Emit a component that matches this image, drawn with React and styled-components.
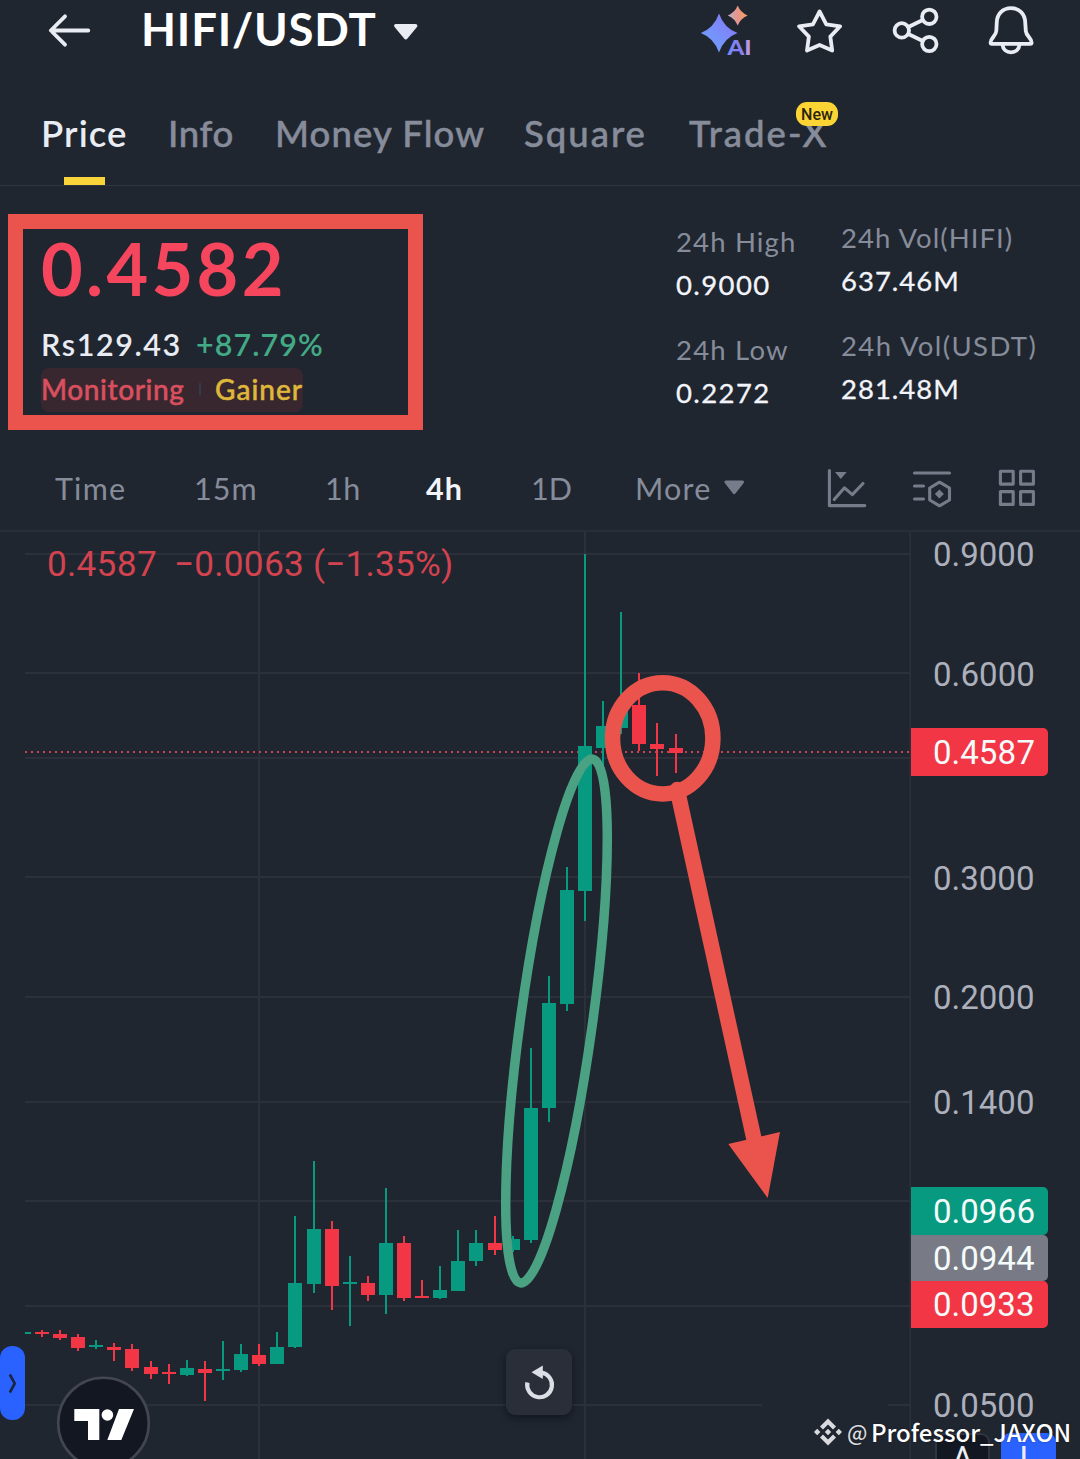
import React from "react";
import styled, { createGlobalStyle } from "styled-components";

const C = {
  bg: "#1f2630",
  line: "#2b303b",
  text: "#eaecf3",
  muted: "#878c9a",
  up: "#089981",
  down: "#f23645",
  mark: "#eb544c",
  yellow: "#fcd535",
};

const Global = createGlobalStyle`
  html, body { margin: 0; padding: 0; background: ${C.bg}; }
  body { overflow: hidden; }
`;

const Screen = styled.main`
  width: 1080px;
  height: 1459px;
  overflow: hidden;
  display: flex;
  flex-direction: column;
  background: ${C.bg};
  color: ${C.text};
  font-family: Lato, "Open Sans", sans-serif;
  font-variant-numeric: lining-nums;
`;

/* ---------- header ---------- */
const Header = styled.header`
  display: flex;
  height: 60px;
  flex: none;
`;
const HeaderIcon = styled.svg`
  display: block;
  flex: none;
  width: ${(p) => p.$w}px;
  height: 60px;
  margin-left: ${(p) => p.$gap || 0}px;
  fill: none;
  stroke: ${C.text};
  stroke-width: 3.8;
  stroke-linecap: round;
  stroke-linejoin: round;
`;
const Title = styled.h1`
  margin: 0 0 0 41px;
  width: 249px;
  font-size: 45.5px;
  font-weight: 700;
  line-height: 58px;
  letter-spacing: 0.8px;
  white-space: nowrap;
  color: #fff;
`;
const AiText = styled.text`
  font: 900 20px Lato, sans-serif;
  stroke: none;
`;

/* ---------- tabs ---------- */
const Tabs = styled.nav`
  display: grid;
  grid-template-columns: 127px 107px 249px 165px 160px;
  box-sizing: border-box;
  flex: none;
  height: 126px;
  padding: 51px 0 0 41px;
  border-bottom: 1px solid #303640;
`;
const Tab = styled.div`
  justify-self: start;
  display: flex;
  flex-direction: column;
  align-items: center;
  position: relative;
  font-size: 36.5px;
  line-height: 44px;
  white-space: nowrap;
  font-weight: ${(p) => (p.$active ? 600 : 500)};
  -webkit-text-stroke: ${(p) => (p.$active ? 0 : 0.5)}px ${C.muted};
  color: ${(p) => (p.$active ? C.text : C.muted)};
  letter-spacing: ${(p) => p.$ls || 0}px;
`;
const Indicator = styled.span`
  width: 41px;
  height: 8px;
  margin-top: 22px;
  background: #f8d33a;
`;
const NewBadge = styled.span`
  position: absolute;
  top: -9px;
  left: 107px;
  width: 42px;
  height: 24px;
  border-radius: 11px;
  background: ${C.yellow};
  color: #2a2410;
  font: 500 16px/25px Roboto, sans-serif;
  letter-spacing: 0;
  text-align: center;
  -webkit-text-stroke: 0;
`;

/* ---------- summary ---------- */
const Summary = styled.section`
  display: flex;
  position: relative;
  flex: none;
  box-sizing: border-box;
  height: 264px;
  padding-left: 41px;
`;
const PriceBlock = styled.div`
  width: 635px;
  padding-top: 46px;
`;
const LastPrice = styled.div`
  font-size: 72px;
  line-height: 72px;
  font-weight: 700;
  letter-spacing: 3.3px;
  color: #f6465d;
`;
const FiatRow = styled.div`
  display: flex;
  margin-top: 20px;
  font-size: 30.5px;
  line-height: 41px;
  font-weight: 600;
`;
const Fiat = styled.span`
  width: 155px;
  letter-spacing: 1.6px;
`;
const Change = styled.span`
  color: #42ab86;
  letter-spacing: 1.05px;
`;
const TagRow = styled.div`
  display: flex;
  align-items: center;
  box-sizing: border-box;
  width: 262px;
  height: 44px;
  margin-top: 3px;
  padding-bottom: 3px;
  border-radius: 8px;
  background: #38272f;
  font-size: 28px;
  font-weight: 500;
  white-space: nowrap;
`;
const TagName = styled.span`
  color: ${(p) => p.$color};
  -webkit-text-stroke: 0.5px ${(p) => p.$color};
  letter-spacing: ${(p) => p.$ls}px;
`;
const TagDivider = styled.i`
  width: 2px;
  height: 12px;
  margin: 0 auto;
  background: #303c48;
`;
const HighlightBox = styled.div`
  position: absolute;
  left: 8px;
  top: 28px;
  box-sizing: border-box;
  width: 415px;
  height: 216px;
  border: 15px solid ${C.mark};
`;
const StatColumn = styled.div`
  display: flex;
  flex-direction: column;
  gap: 29px;
  width: 165px;
  padding-top: ${(p) => p.$top}px;
`;
const Stat = styled.div`
  display: flex;
  flex-direction: column;
  gap: 7px;
  font-size: 27.5px;
  line-height: 36px;
  white-space: nowrap;
`;
const StatLabel = styled.span`
  color: ${C.muted};
  letter-spacing: ${(p) => p.$ls}px;
`;
const StatValue = styled.span`
  color: #f3f4fa;
  -webkit-text-stroke: 0.3px #f3f4fa;
  letter-spacing: ${(p) => p.$ls}px;
`;

/* ---------- interval bar ---------- */
const IntervalBar = styled.div`
  display: flex;
  flex: none;
  height: 80px;
  border-bottom: 2px solid #292e38;
  padding-left: 55px;
`;
const Interval = styled.span`
  width: ${(p) => p.$w}px;
  font-size: 30.5px;
  line-height: 77px;
  white-space: nowrap;
  font-weight: ${(p) => (p.$active ? 700 : 400)};
  color: ${(p) => (p.$active ? "#f3f4fa" : C.muted)};
  letter-spacing: ${(p) => p.$ls || 0}px;
`;
const ToolIcon = styled.svg`
  display: block;
  flex: none;
  width: ${(p) => p.$w}px;
  height: 80px;
  margin-right: ${(p) => p.$gap || 0}px;
  fill: none;
  stroke: #787c8a;
  stroke-width: 3.1;
  stroke-linecap: round;
  stroke-linejoin: round;
`;

/* ---------- chart ---------- */
const ChartArea = styled.section`
  display: flex;
  position: relative;
  flex: 1;
  font-family: Roboto, sans-serif;
`;
const Plot = styled.svg`
  display: block;
  flex: none;
  width: 911px;
  height: 927px;
`;
const Legend = styled.div`
  position: absolute;
  left: 47px;
  top: 11px;
  display: flex;
  font-size: 35.2px;
  line-height: 42px;
  letter-spacing: 0.2px;
  color: #d3434f;
  white-space: pre;
`;
const LegendPrice = styled.span`
  width: 127px;
`;
const Axis = styled.div`
  position: relative;
  width: 169px;
  font-size: 33px;
`;
const AxisLabel = styled.span`
  position: absolute;
  left: 22px;
  top: ${(p) => p.$y - 532 - 20}px;
  line-height: 41px;
  color: #adb0bb;
`;
const PriceTags = styled.div`
  position: absolute;
  left: 0;
  top: ${(p) => p.$y - 532}px;
  display: flex;
  flex-direction: column;
`;
const PriceTag = styled.span`
  box-sizing: border-box;
  width: 137px;
  height: ${(p) => p.$h}px;
  padding-left: 22px;
  line-height: ${(p) => p.$h + 1}px;
  border-radius: 0 5px 5px 0;
  background: ${(p) => p.$bg};
  color: #f4fbfa;
`;
const ScaleButton = styled.span`
  position: absolute;
  left: ${(p) => p.$x}px;
  top: 901px;
  box-sizing: border-box;
  width: 55px;
  height: 55px;
  border: 2px solid ${(p) => p.$border};
  border-radius: 9px;
  background: ${(p) => p.$bg};
  color: #eceef4;
  font-size: 33px;
  line-height: 48px;
  text-align: center;
`;
const ResetButton = styled.div`
  position: absolute;
  left: 506px;
  top: 817px;
  width: 66px;
  height: 66px;
  border-radius: 9px;
  background: #2a2e39;
  box-shadow: 0 3px 7px rgba(5, 8, 14, 0.5);
`;
const Handle = styled.div`
  position: absolute;
  left: 0;
  top: 814px;
  width: 25px;
  height: 74px;
  border-radius: 12px;
  background: #2962ff;
`;
const Overlay = styled.svg`
  position: absolute;
  left: 0;
  top: 0;
  width: 1080px;
  height: 927px;
`;
const Watermark = styled.div`
  position: absolute;
  left: 814px;
  top: 882px;
  display: flex;
  align-items: center;
  height: 36px;
  font: 500 24px/36px "Noto Sans CJK SC", "Noto Sans", sans-serif;
  color: #fff;
  white-space: nowrap;
  text-shadow: 0 0 2px rgba(0, 0, 0, 0.4);
`;
const WatermarkAt = styled.span`
  width: 24px;
  margin-left: 5px;
  font-size: 21px;
  color: #d9dadd;
`;
const WatermarkName = styled.span`
  letter-spacing: 0;
`;

// [centre x, high, low, body top, body bottom, rising]
const candles = [
  [42, 1330, 1337, 1332, 1334, 0],
  [60, 1330, 1340, 1334, 1338, 0],
  [78, 1334, 1351, 1337, 1348, 0],
  [96, 1340, 1349, 1345, 1347, 1],
  [114, 1343, 1361, 1347, 1350, 0],
  [132, 1344, 1371, 1349, 1368, 0],
  [151, 1361, 1379, 1367, 1374, 0],
  [169, 1364, 1384, 1372, 1374, 0],
  [187, 1360, 1376, 1368, 1375, 1],
  [205, 1361, 1401, 1369, 1373, 0],
  [223, 1341, 1380, 1369, 1371, 1],
  [241, 1344, 1372, 1354, 1370, 1],
  [259, 1344, 1366, 1355, 1364, 0],
  [277, 1332, 1364, 1347, 1364, 1],
  [295, 1216, 1348, 1283, 1347, 1],
  [314, 1161, 1293, 1229, 1284, 1],
  [332, 1221, 1310, 1229, 1286, 0],
  [350, 1256, 1326, 1282, 1284, 1],
  [368, 1276, 1301, 1283, 1295, 0],
  [386, 1188, 1314, 1243, 1295, 1],
  [404, 1236, 1301, 1243, 1298, 0],
  [422, 1280, 1298, 1296, 1298, 0],
  [440, 1266, 1299, 1290, 1298, 1],
  [458, 1230, 1291, 1261, 1291, 1],
  [476, 1230, 1266, 1243, 1261, 1],
  [495, 1216, 1255, 1243, 1250, 0],
  [513, 1236, 1252, 1239, 1250, 1],
  [531, 1048, 1243, 1108, 1240, 1],
  [549, 976, 1122, 1003, 1108, 1],
  [567, 867, 1011, 890, 1004, 1],
  [585, 554, 921, 746, 891, 1],
  [603, 701, 766, 726, 748, 1],
  [621, 612, 734, 708, 728, 1],
  [639, 673, 751, 705, 744, 0],
  [657, 723, 776, 744, 749, 0],
  [676, 734, 773, 748, 753, 0],
];

const gridRows = [554, 673, 758, 877, 997, 1102, 1201, 1306];
const axisLabels = [
  ["0.9000", 554],
  ["0.6000", 674],
  ["0.3000", 878],
  ["0.2000", 997],
  ["0.1400", 1102],
  ["0.0500", 1405],
];

function PriceChart() {
  return (
    <ChartArea>
      <Plot viewBox="0 532 911 927">
        <g stroke={C.line} strokeWidth="2">
          {gridRows.map((y) => (
            <line key={y} x1="25" x2="910" y1={y} y2={y} />
          ))}
          <path d="M25 1405H762M888 1405H910" />
          <path d="M259 532V1459M585 532V1459M910.5 532V1459" />
        </g>
        <line x1="25" x2="911" y1="752" y2="752" stroke="#c94350" strokeWidth="2" strokeDasharray="2 4" />
        <rect x="25" y="1332" width="6" height="2" fill={C.up} />
        {candles.map(([x, hi, lo, top, bottom, up]) => (
          <g key={x} fill={up ? C.up : C.down}>
            <rect x={x - 1} y={hi} width="2" height={lo - hi} />
            <rect x={x - 7} y={top} width="14" height={bottom - top} />
          </g>
        ))}
      </Plot>
      <Legend>
        <LegendPrice>0.4587</LegendPrice>
        <span>−0.0063 (−1.35%)</span>
      </Legend>
      <Axis>
        {axisLabels.map(([t, y]) => (
          <AxisLabel key={t} $y={y}>{t}</AxisLabel>
        ))}
        <PriceTags $y={728}>
          <PriceTag $h={48} $bg={C.down}>0.4587</PriceTag>
        </PriceTags>
        <PriceTags $y={1187}>
          <PriceTag $h={48} $bg={C.up}>0.0966</PriceTag>
          <PriceTag $h={46} $bg="#787b86">0.0944</PriceTag>
          <PriceTag $h={47} $bg={C.down}>0.0933</PriceTag>
        </PriceTags>
        <ScaleButton $x={24} $bg="#131722" $border="#2f3440">A</ScaleButton>
        <ScaleButton $x={90} $bg="#2962ff" $border="#2962ff">L</ScaleButton>
      </Axis>
      <ResetButton />
      <Handle />
      <Overlay viewBox="0 532 1080 927" fill="none">
        <path d="M9.8 1374.5L14.8 1383.5L9.8 1392.5" stroke="#1b2440" strokeWidth="2.6" />
        <path d="M527.4 1382.5A12.4 12.4 0 1 0 541.5 1372.6" stroke="#dcdee6" strokeWidth="4.2" />
        <path d="M531.5 1372.3L542.8 1365.6V1379Z" fill="#dcdee6" />
        <circle cx="103.5" cy="1423" r="45.3" fill="#131722" stroke="#434651" strokeWidth="2.6" />
        <path d="M74.3 1409H99.3V1440H88V1421H74.3ZM119 1409H134L121.3 1440H107.3Z" fill="#fff" />
        <circle cx="107.4" cy="1415" r="5.8" fill="#fff" />
        <ellipse cx="556.5" cy="1021" rx="36" ry="264.4" transform="rotate(7.86 556.5 1021)" stroke="#4aa283" strokeWidth="9.5" />
        <ellipse cx="662.7" cy="738.3" rx="50.2" ry="55.6" stroke={C.mark} strokeWidth="15.5" />
        <path d="M677.2 789.5L754 1139" stroke={C.mark} strokeWidth="15.4" />
        <circle cx="677.3" cy="789.5" r="7.7" fill={C.mark} />
        <path d="M728.3 1144L780 1132L767.7 1198Z" fill={C.mark} />
      </Overlay>
      <Watermark>
        <svg width="28" height="28" viewBox="0 0 28 28" fill="#d9dadd">
          <path d="M14 0.5L22 8.5L19 11.5L14 6.5L9 11.5L6 8.5Z" />
          <path d="M14 27.5L22 19.5L19 16.5L14 21.5L9 16.5L6 19.5Z" />
          <path d="M3.2 10.8L6.4 14L3.2 17.2L0 14ZM24.8 10.8L28 14L24.8 17.2L21.6 14ZM14 10.8L17.2 14L14 17.2L10.8 14Z" />
        </svg>
        <WatermarkAt>@</WatermarkAt>
        <WatermarkName>Professor_JAXON</WatermarkName>
      </Watermark>
    </ChartArea>
  );
}

export default function App() {
  return (
    <Screen>
      <Global />
      <Header>
        <HeaderIcon $w={60} $gap={40} viewBox="40 0 60 60">
          <path d="M88.3 30.5H51M65 16.3L50.8 30.5L65 44.7" />
        </HeaderIcon>
        <Title>HIFI/USDT</Title>
        <HeaderIcon $w={40} viewBox="390 0 40 60">
          <path d="M396 25.8H415.5L405.8 37.5Z" fill={C.text} />
        </HeaderIcon>
        <HeaderIcon $w={60} $gap={265} viewBox="695 0 60 60">
          <defs>
            <linearGradient id="aiBlue" x1="0" y1="1" x2="1" y2="0">
              <stop offset="0" stopColor="#6aa6ff" />
              <stop offset="1" stopColor="#8875f5" />
            </linearGradient>
            <linearGradient id="aiWarm" x1="0" y1="0.5" x2="1" y2="0.4">
              <stop offset="0" stopColor="#b9b3bd" />
              <stop offset="0.5" stopColor="#e9938b" />
              <stop offset="1" stopColor="#f3a05a" />
            </linearGradient>
            <linearGradient id="aiWord" x1="0" y1="0" x2="1" y2="0">
              <stop offset="0" stopColor="#6f8dfa" />
              <stop offset="0.6" stopColor="#8b7cf2" />
              <stop offset="1" stopColor="#cfa6d8" />
            </linearGradient>
          </defs>
          <path stroke="none" fill="url(#aiBlue)" d="M719 13.5Q724 28 737.5 33Q724 38 719 52.5Q714 38 700.8 33Q714 28 719 13.5Z" />
          <path stroke="none" fill="url(#aiWarm)" d="M737.7 5.5Q740.5 12.5 747.6 15.4Q740.5 18.5 737.7 25.5Q734.9 18.5 727.8 15.4Q734.9 12.5 737.7 5.5Z" />
          <AiText x="727.5" y="54.5" fill="url(#aiWord)" textLength="24" lengthAdjust="spacingAndGlyphs">AI</AiText>
        </HeaderIcon>
        <HeaderIcon $w={50} $gap={40} viewBox="795 0 50 60">
          <path d="M819.6 11.5L826.3 24.3L840.2 26.3L830.3 36.6L832.2 50.6L819.6 45L807 50.6L808.9 36.6L799 26.3L812.9 24.3Z" />
        </HeaderIcon>
        <HeaderIcon $w={50} $gap={45} viewBox="890 0 50 60">
          <circle cx="901.8" cy="30.4" r="7.2" />
          <circle cx="929.3" cy="16.8" r="7.2" />
          <circle cx="929.3" cy="44" r="7.2" />
          <path d="M908.3 27L922.8 20M908.3 34L922.8 41" />
        </HeaderIcon>
        <HeaderIcon $w={50} $gap={46} viewBox="986 0 50 60">
          <path d="M1011 8.2C1002.5 8.2 997.2 14.2 996.8 22L996.3 31C996 36 990.6 38 990.6 42.4Q990.6 43.8 992 43.8H1030.2Q1031.6 43.8 1031.6 42.4C1031.6 38 1026.2 36 1025.8 31L1025.2 22C1024.8 14.2 1019.5 8.2 1011 8.2Z" />
          <path d="M1002.6 45C1003 49.5 1006.5 52.3 1011 52.3S1019 49.5 1019.4 45" />
        </HeaderIcon>
      </Header>

      <Tabs>
        <Tab $active $ls={1.1}>Price<Indicator /></Tab>
        <Tab $ls={0.7}>Info</Tab>
        <Tab $ls={1.1}>Money Flow</Tab>
        <Tab $ls={2}>Square</Tab>
        <Tab $ls={2}>Trade-X<NewBadge>New</NewBadge></Tab>
      </Tabs>

      <Summary>
        <PriceBlock>
          <LastPrice>0.4582</LastPrice>
          <FiatRow>
            <Fiat>Rs129.43</Fiat>
            <Change>+87.79%</Change>
          </FiatRow>
          <TagRow>
            <TagName $color="#d8505f" $ls={0.6}>Monitoring</TagName>
            <TagDivider />
            <TagName $color="#dfb73a" $ls={1}>Gainer</TagName>
          </TagRow>
        </PriceBlock>
        <StatColumn $top={38}>
          <Stat><StatLabel $ls={1.15}>24h High</StatLabel><StatValue $ls={1.4}>0.9000</StatValue></Stat>
          <Stat><StatLabel $ls={1.2}>24h Low</StatLabel><StatValue $ls={1.4}>0.2272</StatValue></Stat>
        </StatColumn>
        <StatColumn $top={34}>
          <Stat><StatLabel $ls={1.05}>24h Vol(HIFI)</StatLabel><StatValue $ls={1}>637.46M</StatValue></Stat>
          <Stat><StatLabel $ls={1.4}>24h Vol(USDT)</StatLabel><StatValue $ls={1}>281.48M</StatValue></Stat>
        </StatColumn>
        <HighlightBox />
      </Summary>

      <IntervalBar>
        <Interval $w={139} $ls={1.2}>Time</Interval>
        <Interval $w={131} $ls={1}>15m</Interval>
        <Interval $w={101} $ls={0.5}>1h</Interval>
        <Interval $w={105} $ls={1} $active>4h</Interval>
        <Interval $w={104}>1D</Interval>
        <Interval $w={85} $ls={1.2}>More</Interval>
        <ToolIcon $w={30} $gap={75} viewBox="720 450 30 80">
          <path d="M726 482H742.5L734.2 492.5Z" fill="#787c8a" />
        </ToolIcon>
        <ToolIcon $w={45} $gap={40} viewBox="825 450 45 80">
          <path d="M829.4 470.5V505.6H864.8M834.2 499.5L844.5 487.8L852.3 494.6L863 483.5" />
          <path d="M835 472H846.7L840.8 479Z" fill="#787c8a" stroke="none" />
        </ToolIcon>
        <ToolIcon $w={45} $gap={40} viewBox="910 450 45 80">
          <path d="M914.5 473H949.5M914.5 486H923.5M914.5 499H923.5" />
          <path d="M939.5 482.2L949.5 488V500L939.5 505.8L929.7 500V488Z" />
          <path d="M939.4 489.5L943.9 494L939.4 498.5L934.9 494Z" fill="#787c8a" stroke="none" />
        </ToolIcon>
        <ToolIcon $w={45} viewBox="995 450 45 80">
          {[[1000.4, 471.3], [1020.6, 471.3], [1000.4, 491.6], [1020.6, 491.6]].map(([x, y]) => (
            <rect key={`${x}-${y}`} x={x} y={y} width="12.8" height="12.8" />
          ))}
        </ToolIcon>
      </IntervalBar>

      <PriceChart />
    </Screen>
  );
}
